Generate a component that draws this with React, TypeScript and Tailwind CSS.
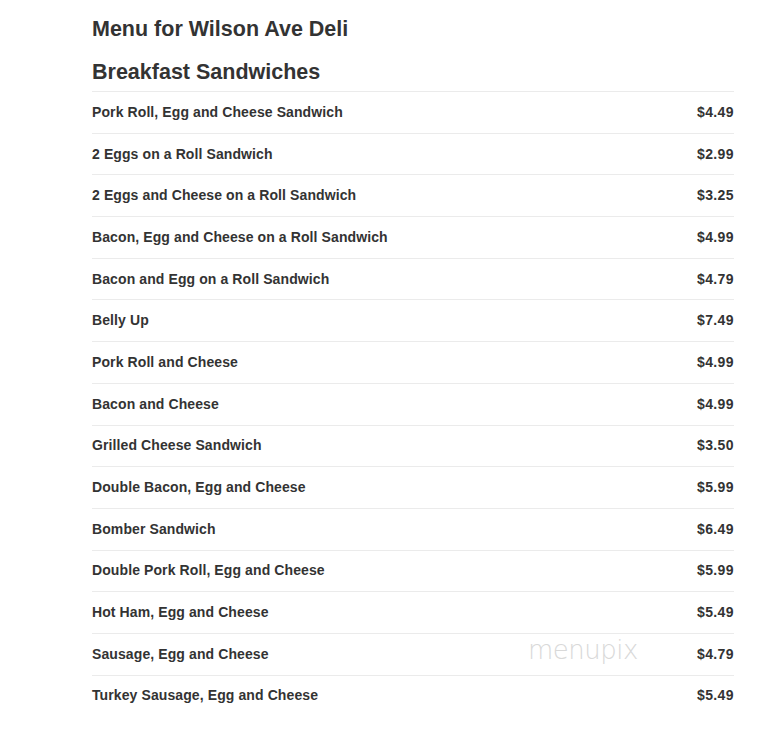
import React from "react";

const items: [string, string][] = [
  ["Pork Roll, Egg and Cheese Sandwich", "$4.49"],
  ["2 Eggs on a Roll Sandwich", "$2.99"],
  ["2 Eggs and Cheese on a Roll Sandwich", "$3.25"],
  ["Bacon, Egg and Cheese on a Roll Sandwich", "$4.99"],
  ["Bacon and Egg on a Roll Sandwich", "$4.79"],
  ["Belly Up", "$7.49"],
  ["Pork Roll and Cheese", "$4.99"],
  ["Bacon and Cheese", "$4.99"],
  ["Grilled Cheese Sandwich", "$3.50"],
  ["Double Bacon, Egg and Cheese", "$5.99"],
  ["Bomber Sandwich", "$6.49"],
  ["Double Pork Roll, Egg and Cheese", "$5.99"],
  ["Hot Ham, Egg and Cheese", "$5.49"],
  ["Sausage, Egg and Cheese", "$4.79"],
  ["Turkey Sausage, Egg and Cheese", "$5.49"],
];

export default function App() {
  return (
    <div className="relative min-h-[733px] bg-white text-[#333] font-['Liberation_Sans',Arial,sans-serif]">
      <div className="ml-[92px] w-[642px] pt-[16px]">
        <h1 className="text-[21.5px] font-bold leading-[27px]">Menu for Wilson Ave Deli</h1>
        <h2 className="mt-[16px] text-[21.5px] font-bold leading-[27px]">Breakfast Sandwiches</h2>
        <div className="mt-[5px]">
          {items.map(([name, price], i) => (
            <div
              key={i}
              className="flex h-[41.7px] items-center justify-between border-t border-[#ebebeb] text-[14px] font-bold tracking-[0.1px]"
            >
              <span>{name}</span>
              <span className="tracking-[0.4px]">{price}</span>
            </div>
          ))}
        </div>
      </div>
      <div className="pointer-events-none absolute left-[528px] top-[637px] text-[26px] font-extralight leading-none text-[#d9d9d9] font-['DejaVu_Sans',sans-serif] tracking-[-0.5px]">
        menupix
      </div>
    </div>
  );
}
